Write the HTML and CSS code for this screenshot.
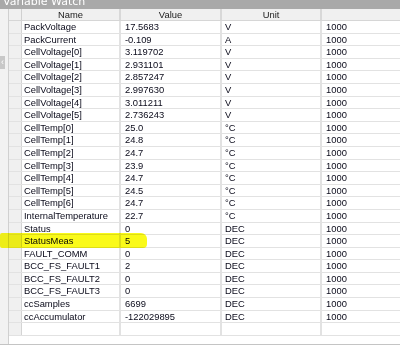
FILE: index.html
```html
<!DOCTYPE html>
<html lang="en">
<head>
    <meta charset="UTF-8">
    <title>Variable Watch</title>
    <link rel="stylesheet" href="styles.css">
</head>
<body>

    <div class="window">
        <div class="titlebar">Variable Watch</div>

        <div class="pane">
            <div class="side">
                <div class="side-tab">&lsaquo;</div>
            </div>

            <div class="grid">
                <div class="row head">
                    <div class="cell rh"></div>
                    <div class="cell name">Name</div>
                    <div class="cell value">Value</div>
                    <div class="cell unit">Unit</div>
                    <div class="cell radix"></div>
                </div>
                <div id="rows"></div>
            </div>

            <div class="marker"></div>
        </div>
    </div>

    <script>
        const vars = [
            ["PackVoltage", "17.5683", "V"],
            ["PackCurrent", "-0.109", "A"],
            ["CellVoltage[0]", "3.119702", "V"],
            ["CellVoltage[1]", "2.931101", "V"],
            ["CellVoltage[2]", "2.857247", "V"],
            ["CellVoltage[3]", "2.997630", "V"],
            ["CellVoltage[4]", "3.011211", "V"],
            ["CellVoltage[5]", "2.736243", "V"],
            ["CellTemp[0]", "25.0", "°C"],
            ["CellTemp[1]", "24.8", "°C"],
            ["CellTemp[2]", "24.7", "°C"],
            ["CellTemp[3]", "23.9", "°C"],
            ["CellTemp[4]", "24.7", "°C"],
            ["CellTemp[5]", "24.5", "°C"],
            ["CellTemp[6]", "24.7", "°C"],
            ["InternalTemperature", "22.7", "°C"],
            ["Status", "0", "DEC"],
            ["StatusMeas", "5", "DEC"],
            ["FAULT_COMM", "0", "DEC"],
            ["BCC_FS_FAULT1", "2", "DEC"],
            ["BCC_FS_FAULT2", "0", "DEC"],
            ["BCC_FS_FAULT3", "0", "DEC"],
            ["ccSamples", "6699", "DEC"],
            ["ccAccumulator", "-122029895", "DEC"],
            ["", "", ""]
        ];

        const rows = document.getElementById("rows");
        vars.forEach(v => {
            const row = document.createElement("div");
            row.className = "row";
            const cells = [["rh", ""], ["name", v[0]], ["value", v[1]], ["unit", v[2]], ["radix", v[0] ? "1000" : ""]];
            cells.forEach(c => {
                const cell = document.createElement("div");
                cell.className = "cell " + c[0];
                cell.textContent = c[1];
                row.appendChild(cell);
            });
            rows.appendChild(row);
        });
    </script>

</body>
</html>
```

FILE: styles.css
```css
* {
    margin: 0;
    padding: 0;
    box-sizing: border-box;
}

body {
    font-family: "Liberation Sans", Arial, sans-serif;
    font-size: 9.4px;
    color: #0a0a1a;
    background-color: #ffffff;
    width: 400px;
    height: 347px;
    overflow: hidden;
}

.window {
    display: flex;
    flex-direction: column;
    height: 347px;
}

.titlebar {
    height: 9px;
    background-color: #a9a9a9;
    color: #ffffff;
    font-family: "DejaVu Sans", sans-serif;
    font-size: 11px;
    line-height: 3px;
    padding-left: 3px;
    overflow: hidden;
    flex-shrink: 0;
}

.pane {
    position: relative;
    display: flex;
    flex: 1;
    border-bottom: 1px solid #c4c4c4;
    margin-bottom: 2px;
}

.side {
    width: 9px;
    background-color: #f2f2f2;
    border-right: 1px solid #d0d0d0;
    padding-top: 47px;
    flex-shrink: 0;
}

.side-tab {
    width: 5px;
    height: 13px;
    background-color: #c8c8c8;
    color: #ffffff;
    font-size: 9px;
    line-height: 13px;
    text-align: center;
    overflow: hidden;
}

.grid {
    flex: 1;
    display: flex;
    flex-direction: column;
}

.row {
    display: flex;
    height: 12.6px;
    border-bottom: 1px solid #e2e2e2;
}

.row.head {
    height: 12px;
    background-color: #f0f0f0;
    border-bottom: 1px solid #d6d6d6;
}

.cell {
    line-height: 11.6px;
    white-space: nowrap;
    overflow: hidden;
    border-right: 1px solid #e2e2e2;
}

.rh {
    width: 13px;
    background-color: #f0f0f0;
    border-right: 1px solid #d4d4d4;
}

.name {
    width: 99px;
    padding-left: 2px;
    border-right: 2px solid #e2e2e2;
}

.value {
    width: 101px;
    padding-left: 4px;
    border-right: 2px solid #e2e2e2;
}

.unit {
    width: 100px;
    padding-left: 3px;
    border-right: 2px solid #e2e2e2;
}

.radix {
    flex: 1;
    padding-left: 4px;
    border-right: none;
}

.head .cell {
    text-align: center;
    padding-left: 0;
    border-right: 2px solid #d8d8d8;
    color: #202020;
}

.head .rh {
    border-right: 1px solid #d0d0d0;
}

.head .radix {
    border-right: none;
}

.marker {
    position: absolute;
    left: 0;
    top: 224px;
    width: 147px;
    height: 15px;
    background-color: #fafa00;
    border-radius: 2px 6px 4px 2px;
    mix-blend-mode: multiply;
    opacity: 0.9;
}
```
